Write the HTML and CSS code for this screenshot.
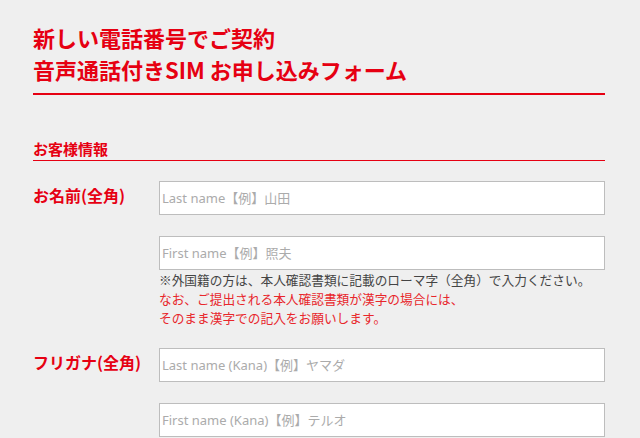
FILE: index.html
```html
<!DOCTYPE html>
<html lang="ja">
<head>
<meta charset="utf-8">
<title>お申し込みフォーム</title>
<link rel="stylesheet" href="styles.css">
</head>
<body>
<div class="page">
  <h1 class="title">新しい電話番号でご契約<br>音声通話付きSIM お申し込みフォーム</h1>
  <h2 class="section">お客様情報</h2>
  <div class="row">
    <div class="label">お名前(全角)</div>
    <div class="fields">
      <input class="input" type="text" placeholder="Last name【例】山田">
      <input class="input second" type="text" placeholder="First name【例】照夫">
      <p class="note">※外国籍の方は、本人確認書類に記載のローマ字（全角）で入力ください。<br><span class="warn">なお、ご提出される本人確認書類が漢字の場合には、<br>そのまま漢字での記入をお願いします。</span></p>
    </div>
  </div>
  <div class="row">
    <div class="label">フリガナ(全角)</div>
    <div class="fields">
      <input class="input" type="text" placeholder="Last name (Kana)【例】ヤマダ">
      <input class="input second" type="text" placeholder="First name (Kana)【例】テルオ">
    </div>
  </div>
</div>
</body>
</html>
```
FILE: styles.css
```css
html, body {
  margin: 0;
  padding: 0;
  background: #efefef;
}
body {
  font-family: "Noto Sans CJK JP", "Noto Sans", sans-serif;
  color: #333;
}
.page {
  width: 572px;
  margin-left: 33px;
  padding-top: 21px;
}
.title {
  margin: 0;
  font-size: 22px;
  font-weight: bold;
  line-height: 32px;
  color: #e60012;
  padding-bottom: 8px;
  border-bottom: 2px solid #e60012;
}
.section {
  margin: 44px 0 0;
  font-size: 15px;
  font-weight: bold;
  line-height: 20px;
  color: #e60012;
  padding-bottom: 1px;
  border-bottom: 1px solid #e60012;
}
.row {
  display: flex;
  margin-top: 20px;
}
.label {
  width: 126px;
  flex: none;
  font-size: 16px;
  font-weight: bold;
  color: #e60012;
  line-height: 28px;
}
.fields {
  flex: 1;
  display: flex;
  flex-direction: column;
}
.input {
  box-sizing: border-box;
  width: 100%;
  height: 34px;
  margin: 0;
  padding: 0 2px;
  border: 1px solid #bdbdbd;
  background: #fff;
  font-family: "Noto Sans", "Noto Sans CJK JP", sans-serif;
  font-size: 13px;
  color: #333;
  outline: none;
}
.input::placeholder {
  color: #ababab;
}
.second {
  margin-top: 21px;
}
.note {
  margin: 0;
  font-size: 12.7px;
  line-height: 19px;
  color: #444;
}
.warn {
  color: #e8262b;
}
.row + .row {
  margin-top: 21px;
}
```
